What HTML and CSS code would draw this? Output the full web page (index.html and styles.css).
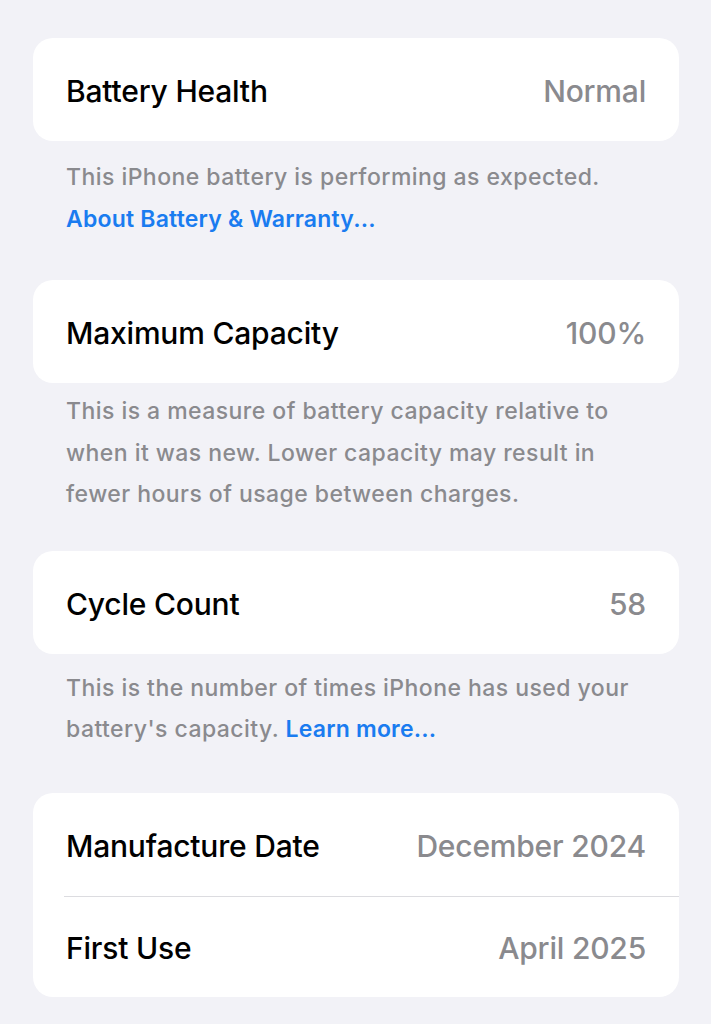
FILE: index.html
```html
<!DOCTYPE html>
<html lang="en">
<head>
  <meta charset="UTF-8">
  <title>Battery Health</title>
  <link rel="stylesheet" href="styles.css">
</head>
<body>
  <main class="settings">
    <section class="group group-health">
      <div class="card">
        <div class="row">
          <span class="label">Battery Health</span>
          <span class="value">Normal</span>
        </div>
      </div>
      <p class="note">This iPhone battery is performing as expected.<br><a href="#">About Battery &amp; Warranty...</a></p>
    </section>

    <section class="group group-capacity">
      <div class="card">
        <div class="row">
          <span class="label">Maximum Capacity</span>
          <span class="value">100%</span>
        </div>
      </div>
      <p class="note">This is a measure of battery capacity relative to when it was new. Lower capacity may result in fewer hours of usage between charges.</p>
    </section>

    <section class="group group-cycles">
      <div class="card">
        <div class="row">
          <span class="label">Cycle Count</span>
          <span class="value">58</span>
        </div>
      </div>
      <p class="note">This is the number of times iPhone has used your battery's capacity. <a href="#">Learn more...</a></p>
    </section>

    <section class="group">
      <div class="card">
        <div class="row">
          <span class="label">Manufacture Date</span>
          <span class="value">December 2024</span>
        </div>
        <div class="row">
          <span class="label">First Use</span>
          <span class="value">April 2025</span>
        </div>
      </div>
    </section>
  </main>
</body>
</html>
```

FILE: styles.css
```css
body {
  margin: 0;
  background: #f2f2f7;
  font-family: Inter, 'Noto Sans', sans-serif;
  color: #000;
}

.settings {
  padding: 38px 32px 0 33px;
}

.card {
  background: #fff;
  border-radius: 20px;
  overflow: hidden;
}

.row {
  display: flex;
  justify-content: space-between;
  align-items: center;
  box-sizing: border-box;
  height: 103px;
  padding: 3px 33px 0 33px;
  font-size: 30px;
  font-weight: 500;
  letter-spacing: -0.2px;
}

.row + .row {
  height: 101px;
  border-top: 1px solid #dcdce0;
  margin-left: 31px;
  padding-left: 2px;
}

.value {
  color: #8a8a8e;
  font-weight: 500;
  letter-spacing: -0.2px;
}

.note {
  margin: 0;
  padding: 16px 36px 0 33px;
  font-size: 23px;
  font-weight: 500;
  line-height: 41.5px;
  color: #8a8a8e;
  letter-spacing: 0.45px;
}

.note a {
  color: #1a7cf0;
  text-decoration: none;
  font-weight: 600;
  letter-spacing: 0.2px;
}

.group-health {
  margin-bottom: 40px;
}

.group-capacity .note {
  padding-top: 8px;
}

.group-capacity {
  margin-bottom: 35px;
}

.group-cycles .note {
  padding-top: 14px;
}

.group-cycles {
  margin-bottom: 42px;
}
```
